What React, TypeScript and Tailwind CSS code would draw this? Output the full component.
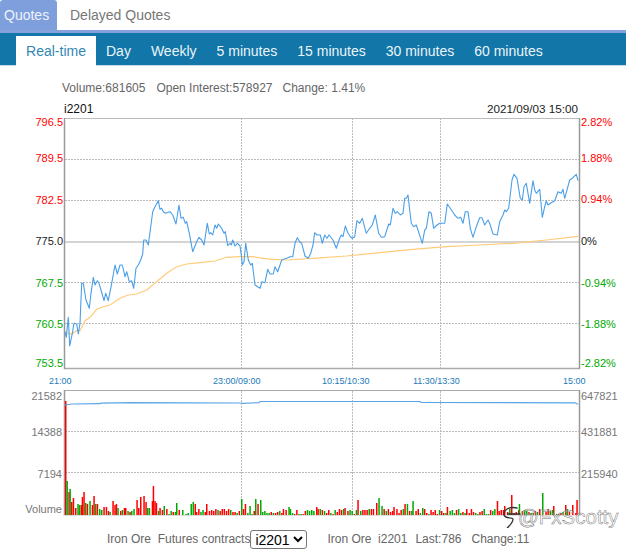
const seg = (ox: number, oy: number, a: number[]) => {
  const r: string[] = [];
  for (let i = 0; i < a.length; i += 2) r.push(`${(ox + a[i] / 3).toFixed(1)},${(oy + a[i + 1] / 3).toFixed(1)}`);
  return r.join(" ");
};

const price = [
  seg(0, 260, [195,215,199,232,205,172,209,258,216,225,222,190,230,192,235,222,240,190,245,70,250,70,258,120,268,145,273,100,280,52,285,75,292,62,297,70,303,90,312,122,317,100,325,122,335,70,345,15,352,42,360,15,367,15,375,50,380,35,388,65,395,62,401,85,408,25,415,15,422,0]),
  seg(0, 130, [428,372,431,330,438,330,445,345,458,245,465,230,475,212,480,238,485,235,490,245,497,250,510,245,518,255,528,282,537,225,543,265,550,262,556,280,560,275,568,310,578,365,590,335,597,322,605,330,612,345,622,280,628,312,632,308,638,315,645,285,650,295,655,282,665,295,672,310,676,305,683,347,690,340,694,345,698,330,705,348,712,340,720,348,725,385]),
  seg(0, 260, [727,15,732,5]),
  seg(0, 130, [737,340,745,390]),
  seg(0, 260, [752,15,757,10,765,75,780,85,786,65,795,68,803,28,810,42,820,42,825,20,833,35,845,0]),
  seg(0, 130, [860,385,870,380,878,380,885,340,892,323,900,337,905,340,915,378,925,385,932,370,939,345]),
  seg(313, 130, [5,308,12,315,22,315,28,340,35,315,42,325,48,315,60,330,70,355,80,325,85,315,90,320,97,288,105,310,112,320,118,325,125,320,132,272,140,280,148,265,160,310,170,295,178,285,187,255,197,310,205,322,215,320,227,282,232,285,240,235,247,250,253,245,262,255,270,250,275,205,280,205,285,195,290,240,295,280,302,290,310,285,328,340,335,300,340,295,348,245,355,250,362,295,372,285,380,280,395,280,403,222,412,235,425,255,435,265,443,262,450,280,457,245,465,245,472,295,480,322,490,290,500,263,507,263,515,285,525,270,530,280,540,312,553,315,560,275,570,255,575,240,580,245,587,235,597,150,603,133,612,145,622,205,628,210,633,170,640,160,650,220,660,152,665,180,670,190,680,178,688,262,695,230,700,212,705,225,715,218,725,212,735,185,745,190,750,178,755,205,770,150,780,143,790,133,795,152]),
].join(" ");

const avg = [
  seg(0, 260, [195,215,205,220,215,222,230,212,240,212,255,182,270,172,290,148,310,140,330,135,360,115,385,105,410,102,440,90,470,65,500,40,530,20,560,12,600,8,645,3]),
  seg(0, 130, [680,382,720,380,760,380,790,385,820,388,860,390]),
  seg(313, 130, [0,385,100,378,200,368,300,358,400,350,500,345,600,340,700,330,795,319]),
].join(" ");

const volLine = "65,405 72,404 100,403.7 101,403.2 132,402.6 241,403 243,403.4 259,402.6 260,401.5 420,401.5 421,402.4 575,402.8 578,404.2";

type Bar = [number, number, "R" | "G"];
const pins: Bar[] = [
  [65,115,"R"],[66.4,35,"G"],[68.3,24,"R"],[69.4,27,"G"],[71,14,"R"],[72.7,18,"R"],[75,8,"R"],[77.3,12,"G"],[79,11,"G"],[80.7,11,"R"],[81.7,19,"R"],[83.3,24,"R"],[85,13,"G"],[86.7,12,"R"],[89.3,15,"G"],[91.7,11,"R"],[93.3,20,"R"],[95,12,"G"],[96.7,12,"R"],[99,7,"G"],[101,6,"G"],[103.3,9,"R"],[105.7,9,"R"],[107.7,5,"R"],[109.3,4,"G"],[112.3,15,"R"],[114.3,11,"R"],[115.7,12,"R"],[117.3,8,"G"],[120,5,"R"],[121.7,6,"G"],[123.7,8,"R"],[125,8,"R"],[127.3,5,"G"],[129.3,4,"R"],[131,5,"G"],[133.3,7,"G"],[136.3,16,"R"],[138,8,"R"],[140,19,"R"],[143.3,20,"R"],[145.3,14,"R"],[147,8,"G"],[148.7,8,"G"],[151.7,15,"R"],[152.7,30,"R"],[154.3,15,"R"],[155.7,13,"R"],[157.7,5,"G"],[159.3,8,"R"],[161.7,6,"R"],[163.5,10,"G"],
  [176,13,"G"],[178.5,6,"R"],[182,6,"G"],[190.5,12,"G"],[192.5,14,"G"],[194.5,12,"R"],[206,12,"R"],[241,17,"G"],[244.7,12,"R"],[249.3,10,"G"],[255,17,"G"],[257.3,12,"R"],[260,16,"G"],[282.7,7,"R"],[288.3,9,"G"],[316,9,"R"],[344.3,8,"R"],[357.3,16,"R"],[376,13,"R"],[378.3,18,"G"],[381.3,10,"G"],[393.3,9,"R"],[404.3,12,"R"],[406.7,12,"G"],[412.3,15,"G"],[422,8,"G"],[446.7,9,"R"],[466,7,"R"],[496.7,15,"R"],[504,10,"R"],[511,21,"R"],[518,6,"R"],[518.7,12,"G"],[526,5,"G"],[542,23,"G"],[553,10,"R"],[565,11,"R"],[572,11,"R"],[576.3,16,"R"],
];

const bars: Bar[] = [...pins];
const pinLimit = 164;
for (let i = 0; i < 196; i++) {
  const x = pinLimit + i * 2.13;
  if (x > 578) break;
  if (pins.some((p) => Math.abs(p[0] - x) < 1.2)) continue;
  const s = Math.abs(Math.sin(i * 12.9898) * 43758.5453) % 1;
  const c = Math.abs(Math.sin(i * 78.233) * 12543.77) % 1;
  bars.push([+x.toFixed(1), 2 + Math.round(s * 5.5), c > 0.42 ? "R" : "G"]);
}

const axisLeft: [string, number, string][] = [
  ["796.5", 126, "#f00"],["789.5", 162, "#f00"],["782.5", 204, "#f00"],["775.0", 245, "#222"],
  ["767.5", 287, "#0a0"],["760.5", 328, "#0a0"],["753.5", 367, "#0a0"],
];
const axisRight: [string, number, string][] = [
  ["2.82%", 126, "#f00"],["1.88%", 162, "#f00"],["0.94%", 203, "#f00"],["0%", 245, "#222"],
  ["-0.94%", 287, "#0a0"],["-1.88%", 328, "#0a0"],["-2.82%", 367, "#0a0"],
];

const navItems = ["Day", "Weekly", "5 minutes", "15 minutes", "30 minutes", "60 minutes"];

export default function App() {
  return (
    <div className="w-[626px] h-[550px] overflow-hidden bg-white font-['Liberation_Sans',Arial,sans-serif]">
      <div className="flex h-[30px] text-sm">
        <div className="w-[57px] flex items-center pl-[4px] bg-[#7f9fdc] text-[#eef2fb] rounded-t-[3px]">Quotes</div>
        <div className="pl-[13px] flex items-center text-[#777]">Delayed Quotes</div>
      </div>
      <div className="h-[3px] bg-[#85a2dc]" />
      <div className="flex h-[33px] pt-[3px] pl-[16px] bg-[#1276a8] text-sm text-[#eaf4f9] border-b border-[#c5dbe6]">
        <div className="w-[80px] flex items-center justify-center bg-white text-[#3287b3] h-[30px]">Real-time</div>
        {navItems.map((n) => (
          <div key={n} className="px-[10px] flex items-center h-[29px]">{n}</div>
        ))}
      </div>
      <div className="h-[34px] pt-[14px] pl-[62px] flex text-xs leading-4 text-[#666]">
        <span>Volume:681605</span>
        <span className="ml-[11px]">Open Interest:578927</span>
        <span className="ml-[10px]">Change: 1.41%</span>
      </div>
      <svg width="626" height="428" viewBox="0 100 626 428" className="block" fontFamily="'Liberation Sans', Arial, sans-serif">
        <text x="64" y="113" fontSize="12" fill="#111">i2201</text>
        <text x="578" y="113" fontSize="11.7" fill="#222" textAnchor="end">2021/09/03 15:00</text>

        {/* price grid */}
        {[159.5, 200.5, 282.5, 323.5].map((y) => (
          <line key={y} x1="65" x2="579" y1={y} y2={y} stroke="#bbb" strokeDasharray="2 1" />
        ))}
        {[241.5, 352.5, 440.5].map((x) => (
          <line key={x} x1={x} x2={x} y1="118" y2="368" stroke="#bbb" strokeDasharray="2 1" />
        ))}
        <rect x="65" y="241" width="514" height="2" fill="#d4d4d4" />
        <line x1="64" x2="580" y1="118.5" y2="118.5" stroke="#bbb" />
        <line x1="64" x2="580" y1="368.5" y2="368.5" stroke="#aaa" strokeWidth="1.5" />
        <line x1="64.5" x2="64.5" y1="118" y2="369" stroke="#999" strokeWidth="1.5" />
        <line x1="579.5" x2="579.5" y1="118" y2="369" stroke="#999" strokeWidth="1.5" />
        <polyline points={avg} fill="none" stroke="#ffcb7a" strokeWidth="1.2" />
        <polyline points={price} fill="none" stroke="#4a9fe8" strokeWidth="1.1" strokeLinejoin="round" />
        {axisLeft.map(([t, y, c]) => (
          <text key={t} x="63" y={y} fontSize="11" fill={c} textAnchor="end">{t}</text>
        ))}
        {axisRight.map(([t, y, c]) => (
          <text key={t} x="581" y={y} fontSize="11" fill={c}>{t}</text>
        ))}
        {[["21:00", 49], ["23:00/09:00", 213], ["10:15/10:30", 322], ["11:30/13:30", 413], ["15:00", 563]].map(([t, x]) => (
          <text key={t as string} x={x as number} y="384" fontSize="9" fill="#1b7ab8">{t}</text>
        ))}

        {/* volume grid */}
        {[431.5, 472.5].map((y) => (
          <line key={y} x1="65" x2="579" y1={y} y2={y} stroke="#bbb" strokeDasharray="2 1" />
        ))}
        {[241.5, 352.5, 440.5].map((x) => (
          <line key={x} x1={x} x2={x} y1="391" y2="515" stroke="#bbb" strokeDasharray="2 1" />
        ))}
        <line x1="64" x2="580" y1="390.5" y2="390.5" stroke="#aaa" />
        <line x1="64.5" x2="64.5" y1="390" y2="516" stroke="#999" strokeWidth="1.5" />
        <line x1="579.5" x2="579.5" y1="390" y2="516" stroke="#999" strokeWidth="1.5" />
        {bars.map(([x, h, c], i) => (
          <rect key={i} x={x} y={516 - h} width="1.5" height={h} fill={c === "R" ? "#f00" : "#0a0"} />
        ))}
        <line x1="64" x2="580" y1="515.5" y2="515.5" stroke="#ddd" />
        <polyline points={volLine} fill="none" stroke="#5aa5e6" strokeWidth="1.2" />
        {[["21582", 400], ["14388", 436], ["7194", 478], ["Volume", 513]].map(([t, y]) => (
          <text key={t as string} x="62" y={y as number} fontSize="11" fill="#777" textAnchor="end">{t}</text>
        ))}
        {[["647821", 400], ["431881", 436], ["215940", 478]].map(([t, y]) => (
          <text key={t as string} x="581" y={y as number} fontSize="11" fill="#777">{t}</text>
        ))}

        {/* watermark */}
        <path d="M517 508 C508 506 503 511 504 515 C505 519 512 517 513 519 C513 524 507 528 503 532 M508 514 L520 514" fill="none" stroke="#333" strokeWidth="1.3" strokeLinecap="round" />
        <text x="518" y="524" fontSize="20.5" fill="#fff" fillOpacity="0.25" stroke="#777" strokeWidth="0.5">@FxScotty</text>
      </svg>
      <div className="h-[22px] flex items-center pl-[107px] text-xs text-[#666]">
        <span>Iron Ore&nbsp; Futures contracts</span>
        <select defaultValue="i2201" className="w-[57px] h-[19px] border border-[#767676] rounded-[3px] bg-white text-sm text-black font-['Liberation_Sans',Arial,sans-serif] appearance-auto">
          <option>i2201</option>
        </select>
        <span className="ml-[20px]">Iron Ore&nbsp; i2201</span>
        <span className="ml-[8px]">Last:786</span>
        <span className="ml-[10px]">Change:11</span>
      </div>
    </div>
  );
}
